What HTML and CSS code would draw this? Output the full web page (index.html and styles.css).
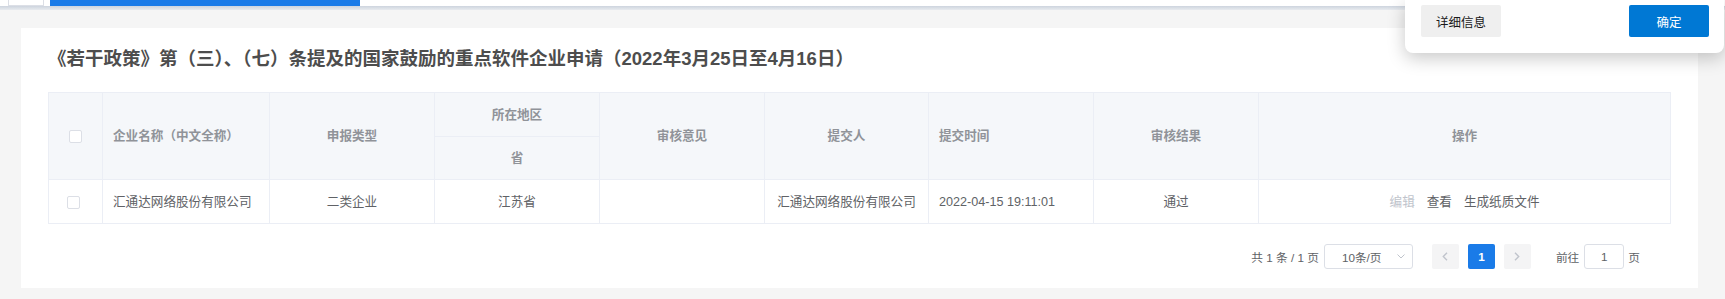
FILE: index.html
```html
<!DOCTYPE html>
<html lang="zh-CN">
<head>
<meta charset="utf-8">
<title>重点软件企业申请</title>
<link rel="stylesheet" href="styles.css">
</head>
<body>
<div class="topbar">
  <div class="tab-gray"></div>
  <div class="tab-blue"></div>
</div>
<div class="topshadow"></div>
<main class="page">
  <section class="card">
    <h2 class="title">《若干政策》第（三）、（七）条提及的国家鼓励的重点软件企业申请（2022年3月25日至4月16日）</h2>
    <table class="grid">
      <colgroup>
        <col class="w-check">
        <col class="w-name">
        <col class="w-std">
        <col class="w-std">
        <col class="w-std">
        <col class="w-submit">
        <col class="w-std">
        <col class="w-std">
        <col>
      </colgroup>
      <thead>
        <tr class="hr1">
          <th rowspan="2" class="c-check"><span class="cb"></span></th>
          <th rowspan="2" class="left">企业名称（中文全称）</th>
          <th rowspan="2">申报类型</th>
          <th>所在地区</th>
          <th rowspan="2">审核意见</th>
          <th rowspan="2">提交人</th>
          <th rowspan="2" class="left">提交时间</th>
          <th rowspan="2">审核结果</th>
          <th rowspan="2">操作</th>
        </tr>
        <tr class="hr2">
          <th>省</th>
        </tr>
      </thead>
      <tbody>
        <tr class="br">
          <td class="c-check body-check"><span class="cb"></span></td>
          <td class="left">汇通达网络股份有限公司</td>
          <td>二类企业</td>
          <td>江苏省</td>
          <td></td>
          <td>汇通达网络股份有限公司</td>
          <td class="left">2022-04-15 19:11:01</td>
          <td>通过</td>
          <td>
            <span class="ops">
              <span class="op disabled">编辑</span>
              <span class="op">查看</span>
              <span class="op">生成纸质文件</span>
            </span>
          </td>
        </tr>
      </tbody>
    </table>
    <div class="pager">
      <span class="total">共 1 条 / 1 页</span>
      <span class="sizes">
        <span class="sizes-text">10条/页</span>
        <svg class="sizes-arrow" width="8" height="5" viewBox="0 0 8 5"><path d="M0.5 0.5 L4 4 L7.5 0.5" fill="none" stroke="#c0c4cc" stroke-width="1"/></svg>
      </span>
      <span class="pbtn prev"><svg width="6" height="9" viewBox="0 0 6 9"><path d="M5 0.8 L1.3 4.5 L5 8.2" fill="none" stroke="#c0c4cc" stroke-width="1.4"/></svg></span>
      <span class="pbtn num">1</span>
      <span class="pbtn next"><svg width="6" height="9" viewBox="0 0 6 9"><path d="M1 0.8 L4.7 4.5 L1 8.2" fill="none" stroke="#c0c4cc" stroke-width="1.4"/></svg></span>
      <span class="jump">前往</span>
      <span class="jump-input">1</span>
      <span class="jump-tail">页</span>
    </div>
  </section>
</main>
<div class="dialog">
  <span class="btn btn-default">详细信息</span>
  <span class="btn btn-primary">确定</span>
</div>
</body>
</html>
```
FILE: styles.css
```css
html, body {
  margin: 0;
  padding: 0;
}
body {
  background: #f5f5f5;
  font-family: "Liberation Sans", "Noto Sans CJK SC", sans-serif;
  font-size: 12.6px;
  color: #606266;
  position: relative;
  height: 299px;
  overflow: hidden;
}
.topbar {
  height: 6px;
  background: #fff;
  display: flex;
  padding-left: 8px;
}
.tab-gray {
  width: 36px;
  box-sizing: border-box;
  border: 1px solid #dcdfe6;
  border-top: 0;
  background: #fff;
  margin-right: 6px;
}
.tab-blue {
  width: 310px;
  background: #1a7be8;
}
.topshadow {
  height: 4px;
  background: linear-gradient(#cdd4de, #e8ebef);
}
.page {
  padding: 18px 27px 0 21px;
}
.card {
  background: #fff;
  padding: 0 27px;
  height: 260px;
  box-sizing: border-box;
}
.title {
  margin: 0 0 20px;
  padding-top: 18px;
  font-size: 18.5px;
  line-height: 26px;
  font-weight: bold;
  color: #4d4d4d;
  white-space: nowrap;
}
.grid {
  width: 100%;
  table-layout: fixed;
  border-collapse: collapse;
  border: 1px solid #ebeef5;
}
.w-check { width: 54px; }
.w-name { width: 167px; }
.w-std { width: 165px; }
.w-submit { width: 164px; }
.grid th,
.grid td {
  border: 1px solid #ebeef5;
  padding: 0 10px;
  text-align: center;
  vertical-align: middle;
  line-height: 18px;
  white-space: nowrap;
}
.grid th {
  background: #f5f7fa;
  color: #909399;
  font-weight: bold;
}
.grid .left {
  text-align: left;
}
.hr1 th { height: 43px; }
.hr2 th { height: 42px; }
.br td { height: 43px; color: #606266; }
.grid .c-check {
  padding: 0;
}
.grid .body-check {
  padding-right: 4px;
}
.cb {
  display: inline-block;
  width: 13px;
  height: 13px;
  box-sizing: border-box;
  border: 1px solid #dcdfe6;
  border-radius: 2px;
  background: #fff;
  vertical-align: middle;
}
.ops {
  display: inline-flex;
  gap: 12px;
}
.op { color: #606266; }
.op.disabled { color: #c0c4cc; }

.pager {
  display: flex;
  align-items: center;
  justify-content: flex-end;
  margin-top: 20px;
  height: 25px;
  padding-right: 31px;
  font-size: 11.7px;
  color: #606266;
}
.total {
  margin-right: 5px;
  white-space: pre;
}
.sizes {
  width: 89px;
  height: 25px;
  box-sizing: border-box;
  border: 1px solid #dcdfe6;
  border-radius: 3px;
  display: flex;
  align-items: center;
  padding-left: 17px;
  margin-right: 19px;
}
.sizes-text {
  flex: 1;
}
.sizes-arrow {
  margin-right: 7px;
}
.pbtn {
  width: 27px;
  height: 25px;
  border-radius: 2px;
  background: #f4f4f5;
  display: flex;
  align-items: center;
  justify-content: center;
  margin-right: 9px;
}
.pbtn.num {
  background: #1a7be8;
  color: #fff;
  font-weight: bold;
}
.pbtn.next {
  margin-right: 25px;
}
.jump {
  margin-right: 5px;
}
.jump-input {
  width: 40px;
  height: 25px;
  box-sizing: border-box;
  border: 1px solid #dcdfe6;
  border-radius: 3px;
  display: flex;
  align-items: center;
  justify-content: center;
}
.jump-tail {
  margin-left: 4px;
}

.dialog {
  position: absolute;
  top: 0;
  right: 1px;
  width: 319px;
  height: 53px;
  box-sizing: border-box;
  padding: 5px 15px 0 16px;
  background: #fff;
  border-radius: 0 0 8px 8px;
  box-shadow: 0 5px 18px rgba(0, 0, 0, 0.22);
  display: flex;
  justify-content: space-between;
  align-items: flex-start;
  font-family: "Noto Sans CJK SC", sans-serif;
}
.btn {
  width: 80px;
  height: 32px;
  border-radius: 2px;
  font-size: 12.5px;
  display: flex;
  align-items: center;
  justify-content: center;
}
.btn-default {
  background: #efefef;
  color: #1a1a1a;
}
.btn-primary {
  background: #0078d4;
  color: #fff;
}
```
